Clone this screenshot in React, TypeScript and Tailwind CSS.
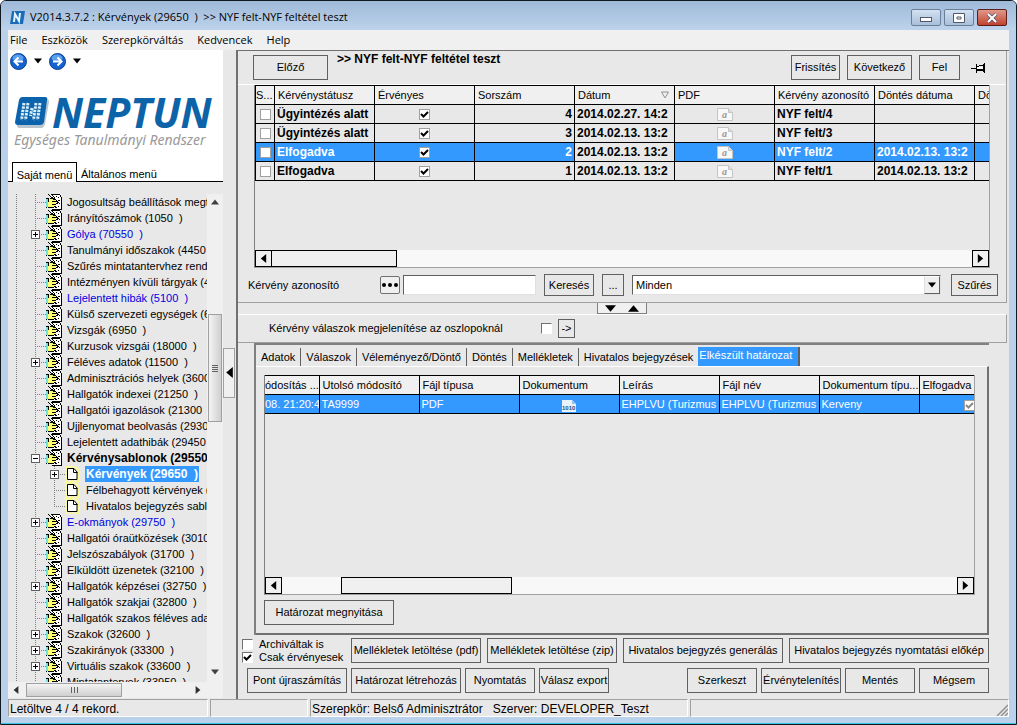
import type { ReactNode } from "react";
import clsx from "clsx";

type TreeItem = {
  label: string;
  box?: "plus" | "minus";
  child?: boolean;
  last?: boolean;
  link?: boolean;
  bold?: boolean;
  selected?: boolean;
};

const treeItems: TreeItem[] = [
  { label: "Jogosultság beállítások megte" },
  { label: "Irányítószámok (1050  )" },
  { label: "Gólya (70550  )", box: "plus", link: true },
  { label: "Tanulmányi időszakok (4450" },
  { label: "Szűrés mintatantervhez rende" },
  { label: "Intézményen kívüli tárgyak (4" },
  { label: "Lejelentett hibák (5100  )", link: true },
  { label: "Külső szervezeti egységek (68" },
  { label: "Vizsgák (6950  )" },
  { label: "Kurzusok vizsgái (18000  )" },
  { label: "Féléves adatok (11500  )", box: "plus" },
  { label: "Adminisztrációs helyek (3600" },
  { label: "Hallgatók indexei (21250  )" },
  { label: "Hallgatói igazolások (21300  )" },
  { label: "Ujjlenyomat beolvasás (29300" },
  { label: "Lejelentett adathibák (29450" },
  { label: "Kérvénysablonok (29550", box: "minus", bold: true },
  { label: "Kérvények (29650  )", box: "plus", child: true, bold: true, selected: true },
  { label: "Félbehagyott kérvények (", child: true },
  { label: "Hivatalos bejegyzés sablo", child: true, last: true },
  { label: "E-okmányok (29750  )", box: "plus", link: true },
  { label: "Hallgatói óraütközések (3010" },
  { label: "Jelszószabályok (31700  )" },
  { label: "Elküldött üzenetek (32100  )" },
  { label: "Hallgatók képzései (32750  )", box: "plus" },
  { label: "Hallgatók szakjai (32800  )" },
  { label: "Hallgatók szakos féléves ada" },
  { label: "Szakok (32600  )", box: "plus" },
  { label: "Szakirányok (33300  )", box: "plus" },
  { label: "Virtuális szakok (33600  )", box: "plus" },
  { label: "Mintatantervek (33950  )" },
];

const requests = [
  { status: "Ügyintézés alatt", no: 4, date: "2014.02.27. 14:2", id: "NYF felt/4", decided: "" },
  { status: "Ügyintézés alatt", no: 3, date: "2014.02.13. 13:2", id: "NYF felt/3", decided: "" },
  { status: "Elfogadva", no: 2, date: "2014.02.13. 13:2", id: "NYF felt/2", decided: "2014.02.13. 13:2", selected: true },
  { status: "Elfogadva", no: 1, date: "2014.02.13. 13:2", id: "NYF felt/1", decided: "2014.02.13. 13:2" },
];

const tabs = ["Adatok", "Válaszok", "Véleményező/Döntő", "Döntés", "Mellékletek", "Hivatalos bejegyzések"];

function Btn({ children, className, label }: { children: ReactNode; className?: string; label?: string }) {
  return (
    <button
      type="button"
      aria-label={label}
      className={clsx(
        "flex shrink-0 items-center justify-center whitespace-nowrap border border-[#606060] bg-[#e8e8e8]",
        className,
      )}
    >
      {children}
    </button>
  );
}

function Check({ label, id, checked, dim, sunken }: { label?: string; id?: string; checked?: boolean; dim?: boolean; sunken?: boolean }) {
  return (
    <span className="inline-grid shrink-0 align-middle">
      <input
        type="checkbox"
        id={id}
        aria-label={label}
        defaultChecked={checked}
        className={clsx(
          "col-start-1 row-start-1 size-[11px] appearance-none border bg-white",
          sunken ? "border-[#707070] border-b-white border-r-white" : "border-[#a0a0a0]",
        )}
      />
      {checked && (
        <svg className="pointer-events-none col-start-1 row-start-1 size-[11px]" viewBox="0 0 11 11">
          <path d="M2 5l2.500 2.500L9 3" fill="none" stroke={dim ? "#8a8a8a" : "#000"} strokeWidth="2" />
        </svg>
      )}
    </span>
  );
}

function Arrow({ dir, className }: { dir: "left" | "right" | "up" | "down"; className?: string }) {
  const points = {
    left: "8,0 8,10 2,5",
    right: "2,0 2,10 8,5",
    up: "0,8 10,8 5,2",
    down: "0,2 10,2 5,8",
  };
  return (
    <svg viewBox="0 0 10 10" className={clsx("shrink-0", className)}>
      <polygon points={points[dir]} fill="currentColor" />
    </svg>
  );
}

/** Hand writing on a sheet, used for every menu group */
function FormIcon() {
  return (
    <svg viewBox="0 0 16 16" className="size-4 shrink-0" shapeRendering="crispEdges">
      <path d="M6 0h9v16H6z" fill="#fff" />
      <path d="M8 0h6v1H8zM15 3h1v13h-1zM14 1h1v2h-1zM6 15h10v1H6zM6 0h2v1H6zM10 2h1v1h-1zM12 3h1v1h-1zM12 6h2v1h-2zM13 9h1v1h-1zM12 12h1v1h-1zM9 13h2v1H9z" fill="#000" />
      <path d="M0 5h2v8H0z" fill="#6fe3e3" />
      <path d="M2 6h2V5h3v1h4v2h-1v2H9v2H8v1H2z" fill="#ffff70" />
      <path d="M0 4h3v1H0zM2 5h1v3H2zM4 4h4v1H4zM7 5h3v1H7zM6 7h6v1H6zM10 9h2v1h-2zM6 10h4v1H6zM8 12h2v1H8zM2 13h6v1H2zM0 13h1v1H0zM11 8h1v1h-1z" fill="#000" />
      <path d="M2 0h1v1H2zM3 1h1v1H3zM4 2h1v1H4zM5 3h2v1H5zM5 0h1v1H5zM6 1h1v1H6zM7 2h1v1H7zM8 3h1v2H8zM9 5h1v1H9zM10 6h1v1h-1zM12 8h1v1h-1z" fill="#000" />
    </svg>
  );
}

function PageIcon() {
  return (
    <svg viewBox="0 0 16 16" className="size-4 shrink-0">
      <path d="M1.500 1h9l3.500 4v10.500H1.500z" fill="none" stroke="#ffff80" strokeWidth="2" strokeDasharray="2 1" />
      <path d="M2.500 2.500h6.500l3 3.500v7.500H2.500z" fill="#fff" stroke="#000" />
      <path d="M8.500 2.500v4h4" fill="none" stroke="#000" />
    </svg>
  );
}

function Guides({ item }: { item: TreeItem }) {
  const x = item.child ? 46 : 27;
  const width = item.child ? 57 : 38;
  return (
    <svg width={width} height={16} className="shrink-0" shapeRendering="crispEdges">
      <g stroke="#808080" strokeDasharray="1 1">
        <path d="M8.500 0v16M27.500 0v16" />
        {item.child && <path d={`M46.500 0v${item.last ? 8 : 16}`} />}
        <path d={`M${x} 8.500H${width}`} />
      </g>
      {item.box && (
        <g fill="none">
          <rect x={x - 3.5} y="4.500" width="8" height="8" fill="#fff" stroke="#606060" />
          <path d={`M${x - 2} 8.500h5`} stroke="#000" />
          {item.box === "plus" && <path d={`M${x + 0.5} 6v5`} stroke="#000" />}
        </g>
      )}
    </svg>
  );
}

function Sidebar() {
  return (
    <aside className="flex w-[215px] shrink-0 flex-col bg-white">
      <div className="flex h-[22px] shrink-0 items-center pl-[2px]">
        <NavCircle dir="left" />
        <Arrow dir="down" className="mx-[7px] size-2" />
        <NavCircle dir="right" />
        <Arrow dir="down" className="mx-[7px] size-2" />
      </div>
      <div className="h-[90px] shrink-0 pl-[6px] pt-5">
        <div className="flex h-10 items-center">
          <svg viewBox="0 0 34 32" className="h-8 w-[36px] shrink-0">
            <path d="M8 3h24q2 0 2 3l-4 22q-1 4-4 4H5q-4 0-3-4l3-21q1-4 3-4z" fill="#b9c4cf" />
            <path d="M7 1h23q3 0 2 3l-3 22q-1 3-4 3H3q-3 0-3-3L4 4q1-3 3-3z" fill="#0c63ad" />
            <path d="M9 7L6.500 24M13 7l-2.500 17M17 12l-1.500 8M21 7l-2.500 17M25 7l-2.500 17" stroke="#d7f0fb" strokeWidth="3" strokeDasharray="2.400 1" fill="none" />
          </svg>
          <span className="pl-[2px] font-['Noto_Sans',sans-serif] text-[41px] font-bold italic leading-10 text-[#0c63a8]">
            NEPTUN
          </span>
        </div>
        <div className="whitespace-nowrap font-['Noto_Sans',sans-serif] text-sm italic leading-4 text-[#999]">
          Egységes Tanulmányi Rendszer
        </div>
      </div>
      <div className="flex h-5 shrink-0 items-stretch">
        <span className="w-1 border-b border-black" />
        <button type="button" className="w-[65px] whitespace-nowrap border border-b-0 border-black bg-white pt-1">
          Saját menü
        </button>
        <button type="button" className="flex-1 whitespace-nowrap border-b border-black pl-1 pt-1 text-left">
          Általános menü
        </button>
      </div>
      <div className="flex min-h-0 flex-1 bg-[#e8e8e8] pt-3">
        <ul className="h-full w-[199px] shrink-0 overflow-hidden">
          {treeItems.map((item) => (
            <li key={item.label} className="flex h-4 items-center">
              <Guides item={item} />
              {item.child ? <PageIcon /> : <FormIcon />}
              <span
                className={clsx(
                  "ml-1 whitespace-pre px-px leading-4",
                  item.link && "text-[#0000e0]",
                  item.bold && "text-xs font-bold",
                  item.selected && "bg-[#3399ff] text-white",
                )}
              >
                {item.label}
              </span>
            </li>
          ))}
        </ul>
        <div className="flex flex-1 flex-col items-center bg-[#f0f0f0] pb-[6px] pt-1 text-[#404040]">
          <Arrow dir="up" className="size-2" />
          <div className="mt-[108px] flex h-[108px] w-[14px] flex-col items-center justify-center gap-px border border-[#a0a0a0] bg-linear-to-r from-[#f4f4f4] to-[#cfcfcf]">
            <i className="h-px w-[6px] bg-[#606060]" />
            <i className="h-px w-[6px] bg-[#606060]" />
            <i className="h-px w-[6px] bg-[#606060]" />
            <i className="h-px w-[6px] bg-[#606060]" />
          </div>
          <span className="flex-1" />
          <Arrow dir="down" className="size-2" />
        </div>
      </div>
      <div className="flex h-4 shrink-0 items-center bg-[#f0f0f0] pl-1 text-[#303030]">
        <Arrow dir="left" className="size-2" />
        <div className="ml-[6px] flex h-[14px] w-24 items-center justify-center gap-[2px] border border-[#a0a0a0] bg-linear-to-b from-[#f4f4f4] to-[#cfcfcf]">
          <i className="h-[6px] w-px bg-[#606060]" />
          <i className="h-[6px] w-px bg-[#606060]" />
          <i className="h-[6px] w-px bg-[#606060]" />
        </div>
        <Arrow dir="right" className="ml-[72px] size-2" />
      </div>
      <div className="h-px shrink-0 bg-[#e8e8e8]" />
    </aside>
  );
}

function NavCircle({ dir }: { dir: "left" | "right" }) {
  return (
    <button type="button" aria-label={dir === "left" ? "Vissza" : "Előre"} className="size-[17px] shrink-0">
      <svg viewBox="0 0 17 17">
        <circle cx="8.500" cy="8.500" r="8" fill="#1463cf" stroke="#0b3e94" />
        <ellipse cx="8" cy="5" rx="5.500" ry="3.500" fill="#5aa0ee" />
        <path
          d={dir === "left" ? "M13 8.500H5M8.500 4.500l-4 4 4 4" : "M4 8.500h8M8.500 4.500l4 4-4 4"}
          fill="none"
          stroke="#fff"
          strokeWidth="2"
        />
      </svg>
    </button>
  );
}

function PdfIcon() {
  return (
    <svg viewBox="0 0 16 13" className="inline h-[13px] w-4 align-middle">
      <path d="M.500.500h11l4 4v8H.500z" fill="#f8f8f8" stroke="#c4c4c4" />
      <path d="M11.500.500v4h4" fill="#ddd" stroke="#c4c4c4" />
      <text x="5" y="10" fontSize="10" fontStyle="italic" fontWeight="bold" fontFamily="Liberation Serif, serif" fill="#999">a</text>
    </svg>
  );
}

function DocIcon() {
  return (
    <svg viewBox="0 0 16 13" className="inline h-[13px] w-4 align-middle">
      <path d="M1 1h10l4 4v8H1z" fill="#e8f2fb" />
      <path d="M11 1v4h4" fill="#9cc4ea" />
      <text x="1" y="11" fontSize="6" fontWeight="bold" fontFamily="Liberation Sans, sans-serif" fill="#1b4f86">1010</text>
    </svg>
  );
}

const cellBase = "h-[19px] overflow-hidden whitespace-nowrap border border-black py-0 leading-4";
const thBase = `${cellBase} bg-[#f0f0f0] text-left font-normal`;
const th = `${thBase} pl-[3px] pr-0`;
const td = `${cellBase} px-[2px]`;

function RequestGrid() {
  return (
    <div className="flex h-[183px] flex-col border border-t-0 border-[#a0a0a0] border-l-[#808080]">
      <div className="min-h-0 flex-1 overflow-hidden">
        <table className="w-[819px] table-fixed border-collapse">
          <colgroup>
            <col className="w-[19px]" />
            <col span={8} className="w-[100px]" />
          </colgroup>
          <thead>
            <tr>
              <th className={clsx(thBase, "px-0")}>S...</th>
              <th className={th}>Kérvénystátusz</th>
              <th className={th}>Érvényes</th>
              <th className={th}>Sorszám</th>
              <th className={th}>
                <span className="flex items-center justify-between pr-[5px]">
                  Dátum
                  <svg viewBox="0 0 8 8" className="size-2">
                    <path d="M.500 1h7L4 7z" fill="none" stroke="#909090" />
                  </svg>
                </span>
              </th>
              <th className={th}>PDF</th>
              <th className={th}>Kérvény azonosító</th>
              <th className={th}>Döntés dátuma</th>
              <th className={th}>Dö</th>
            </tr>
          </thead>
          <tbody className="text-xs font-bold">
            {requests.map((r) => (
              <tr key={r.no} className={clsx(r.selected && "bg-[#3399ff] text-white")}>
                <td className={clsx(td, "text-center")}>
                  <Check label={`Kijelölés ${r.no}`} />
                </td>
                <td className={td}>{r.status}</td>
                <td className={clsx(td, "text-center")}>
                  <Check label={`Érvényes ${r.no}`} checked />
                </td>
                <td className={clsx(td, "text-right")}>{r.no}</td>
                <td className={clsx(td, "bg-[#e8e8e8] text-black")}>{r.date}</td>
                <td className={clsx(td, "text-center")}>
                  <PdfIcon />
                </td>
                <td className={td}>{r.id}</td>
                <td className={td}>{r.decided}</td>
                <td className={td} />
              </tr>
            ))}
          </tbody>
        </table>
      </div>
      <div className="flex h-[17px] shrink-0 bg-[#f8f8f8]">
        <ScrollEnd dir="left" />
        <div className="w-[125px] border border-l-0 border-black bg-[#f0f0f0]" />
        <span className="flex-1" />
        <ScrollEnd dir="right" />
      </div>
    </div>
  );
}

function ScrollEnd({ dir }: { dir: "left" | "right" }) {
  return (
    <button
      type="button"
      aria-label={dir === "left" ? "Görgetés balra" : "Görgetés jobbra"}
      className="flex w-[17px] shrink-0 items-center justify-center border border-black bg-[#f0f0f0]"
    >
      <Arrow dir={dir} className="size-[9px]" />
    </button>
  );
}

function DocumentGrid() {
  return (
    <div className="flex min-h-0 flex-1 flex-col border border-[#a0a0a0] border-l-[#808080] border-t-0">
      <div className="min-h-0 flex-1 overflow-hidden">
        <table className="w-[754px] table-fixed border-collapse">
          <colgroup>
            <col className="w-[54px]" />
            <col span={7} className="w-[100px]" />
          </colgroup>
          <thead>
            <tr>
              <th className={clsx(thBase, "border-l-0 px-0")}>ódosítás ...</th>
              <th className={th}>Utolsó módosító</th>
              <th className={th}>Fájl típusa</th>
              <th className={th}>Dokumentum</th>
              <th className={th}>Leírás</th>
              <th className={th}>Fájl név</th>
              <th className={th}>Dokumentum típu...</th>
              <th className={th}>Elfogadva</th>
            </tr>
          </thead>
          <tbody>
            <tr className="bg-[#3399ff] text-white">
              <td className={clsx(cellBase, "border-l-0 px-0")}>08. 21:20:4</td>
              <td className={td}>TA9999</td>
              <td className={td}>PDF</td>
              <td className={clsx(td, "text-center")}>
                <DocIcon />
              </td>
              <td className={td}>EHPLVU (Turizmus</td>
              <td className={td}>EHPLVU (Turizmus</td>
              <td className={td}>Kerveny</td>
              <td className={clsx(td, "text-center")}>
                <Check label="Elfogadva" checked dim />
              </td>
            </tr>
          </tbody>
        </table>
      </div>
      <div className="flex h-[17px] shrink-0 bg-[#f8f8f8]">
        <ScrollEnd dir="left" />
        <div className="ml-[59px] w-[171px] border border-black bg-[#f0f0f0]" />
        <span className="flex-1" />
        <ScrollEnd dir="right" />
      </div>
    </div>
  );
}

function SearchBar() {
  return (
    <div className="flex h-[34px] items-center pl-[10px] pr-2">
      <label htmlFor="search-id" className="w-[132px] shrink-0">
        Kérvény azonosító
      </label>
      <button
        type="button"
        aria-label="Lista"
        className="flex h-[18px] w-5 shrink-0 items-center justify-center rounded-xs border border-[#707070] bg-[#f0f0f0]"
      >
        <svg viewBox="0 0 16 4" className="h-1 w-4">
          <circle cx="2" cy="2" r="2" />
          <circle cx="8" cy="2" r="2" />
          <circle cx="14" cy="2" r="2" />
        </svg>
      </button>
      <input
        id="search-id"
        className="ml-[3px] h-[20px] w-[133px] border border-[#e0e0e0] border-l-[#606060] border-t-[#606060] bg-white px-1"
      />
      <Btn className="ml-2 h-[22px] w-[50px]">Keresés</Btn>
      <Btn className="ml-2 h-[22px] w-[22px]">...</Btn>
      <div className="ml-2 grid h-[20px] min-w-0 flex-1 border border-[#e0e0e0] border-l-[#606060] border-t-[#606060] bg-white">
        <select aria-label="Szűrő" className="col-start-1 row-start-1 appearance-none bg-transparent px-[3px]">
          <option>Minden</option>
        </select>
        <span className="pointer-events-none col-start-1 row-start-1 flex w-4 items-center justify-center justify-self-end border border-[#606060] border-l-[#e0e0e0] border-t-white bg-[#f0f0f0]">
          <Arrow dir="down" className="size-2" />
        </span>
      </div>
      <Btn className="ml-[10px] h-[22px] w-[47px]">Szűrés</Btn>
    </div>
  );
}

function DetailTabs() {
  return (
    <div className="ml-4 mr-5 flex min-h-0 flex-1 flex-col border-l-2 border-t-2 border-[#808080]">
      <div className="flex h-[21px] shrink-0 items-end">
        {tabs.map((tab, i) => (
          <button
            type="button"
            key={tab}
            className={clsx(
              "h-[18px] whitespace-nowrap px-[5px] leading-[18px]",
              i < tabs.length - 1 && "border-r border-[#606060]",
            )}
          >
            {tab}
          </button>
        ))}
        <button
          type="button"
          className="h-[19px] w-[102px] whitespace-nowrap border-r-2 border-[#606060] bg-[#3399ff] px-px pb-1 text-left leading-4 text-white"
        >
          Elkészült határozat
        </button>
      </div>
      <div className="flex min-h-0 flex-1 flex-col border-b-2 border-r-2 border-t border-[#707070] border-t-white pb-2 pl-2 pr-3 pt-2">
        <DocumentGrid />
        <Btn className="mt-[5px] h-[25px] w-[130px]">Határozat megnyitása</Btn>
      </div>
    </div>
  );
}

function MainPanel() {
  return (
    <main className="flex min-w-0 flex-1 flex-col border-l-2 border-t border-[#707070]">
      <section className="mr-[2px] shrink-0 border-b border-r border-[#a0a0a0]">
        <header className="flex h-[34px] items-center border-b border-white pl-[15px] pr-5">
          <Btn className="h-[25px] w-[75px]">Előző</Btn>
          <h1 className="min-w-0 flex-1 self-start pl-[9px] text-xs font-bold leading-4">&gt;&gt; NYF felt-NYF feltétel teszt</h1>
          <Btn className="h-[25px] w-[49px]">Frissítés</Btn>
          <Btn className="ml-[7px] h-[25px] w-[65px]">Következő</Btn>
          <Btn className="ml-[7px] h-[25px] w-[41px]">Fel</Btn>
          <button type="button" aria-label="Rögzítés" className="ml-[11px] shrink-0">
            <svg viewBox="0 0 15 10" className="h-[10px] w-[15px]" shapeRendering="crispEdges">
              <path d="M0 5h5v1H0zM5 1h1v9H5zM6 3h2v1H6zM8 2h4v1H8zM6 6h6v2H6zM12 1h1v8h-1zM13 0h1v10h-1z" fill="#000" />
              <path d="M6 4h6v2H6z" fill="#fff" />
            </svg>
          </button>
        </header>
        <div className="pl-4 pr-4">
          <RequestGrid />
        </div>
        <SearchBar />
      </section>
      <div className="flex h-[11px] shrink-0 justify-center pr-1">
        <button
          type="button"
          aria-label="Elválasztó"
          className="flex w-[50px] items-center justify-center gap-3 border border-t-0 border-[#808080] bg-[#f0f0f0]"
        >
          <Arrow dir="down" className="size-[11px]" />
          <Arrow dir="up" className="size-[11px]" />
        </button>
      </div>
      <section className="mr-[2px] flex h-[29px] shrink-0 items-center border-b border-r border-t border-[#a0a0a0] border-t-white pl-[31px]">
        <label htmlFor="show-answers" className="w-[272px]">
          Kérvény válaszok megjelenítése az oszlopoknál
        </label>
        <Check id="show-answers" sunken />
        <Btn className="ml-[6px] h-[19px] w-[17px]">-&gt;</Btn>
      </section>
      <DetailTabs />
      <footer className="flex shrink-0 flex-col gap-[5px] pb-[6px] pl-1 pr-5 pt-[3px]">
        <div className="flex h-[25px]">
          <div className="flex w-[109px] shrink-0 flex-col justify-between">
            <label className="flex items-center gap-[6px] leading-3">
              <Check sunken />
              Archiváltak is
            </label>
            <label className="flex items-center gap-[6px] leading-3">
              <Check checked sunken />
              Csak érvényesek
            </label>
          </div>
          <Btn className="w-[130px]">Mellékletek letöltése (pdf)</Btn>
          <Btn className="ml-[6px] w-[130px]">Mellékletek letöltése (zip)</Btn>
          <Btn className="ml-auto w-[160px]">Hivatalos bejegyzés generálás</Btn>
          <Btn className="ml-[6px] w-[200px]">Hivatalos bejegyzés nyomtatási előkép</Btn>
        </div>
        <div className="flex h-[25px] gap-[4px] pl-[5px]">
          <Btn className="w-[100px]">Pont újraszámítás</Btn>
          <Btn className="w-[110px]">Határozat létrehozás</Btn>
          <Btn className="w-[70px]">Nyomtatás</Btn>
          <Btn className="w-[70px]">Válasz export</Btn>
          <Btn className="ml-auto w-[70px]">Szerkeszt</Btn>
          <Btn className="w-[80px]">Érvénytelenítés</Btn>
          <Btn className="w-[70px]">Mentés</Btn>
          <Btn className="w-[70px]">Mégsem</Btn>
        </div>
      </footer>
    </main>
  );
}

function TitleBar() {
  return (
    <div className="flex h-[29px] shrink-0 items-center bg-linear-to-b from-[#9fb9d8] to-[#bdd3ec] pl-[9px] pr-[9px] pt-1 font-['Open_Sans',sans-serif]">
      <svg viewBox="0 0 15 13" className="h-[13px] w-[15px] shrink-0">
        <path d="M2 0h13l-2 13H0z" fill="#1a6cb8" />
        <path d="M4 11l1-8 4 7 1-8" fill="none" stroke="#e4f4ff" strokeWidth="2" />
      </svg>
      <span className="flex-1 whitespace-pre pl-[5px]">V2014.3.7.2 : Kérvények (29650  )  &gt;&gt; NYF felt-NYF feltétel teszt</span>
      <div className="flex h-[17px] gap-[3px]">
        <button type="button" aria-label="Kis méret" className="flex w-[30px] items-center justify-center rounded-xs border border-[#6b7f99] bg-linear-to-b from-[#d3e1f2] to-[#a9bfd9]">
          <svg viewBox="0 0 12 10" className="h-[10px] w-3">
            <rect x=".500" y="4.500" width="11" height="4" fill="#fff" stroke="#505868" />
          </svg>
        </button>
        <button type="button" aria-label="Teljes méret" className="flex w-[30px] items-center justify-center rounded-xs border border-[#6b7f99] bg-linear-to-b from-[#d3e1f2] to-[#a9bfd9]">
          <svg viewBox="0 0 12 10" className="h-[10px] w-3">
            <path d="M.500.500h11v9H.500zM4 4h4v2H4z" fill="#fff" stroke="#505868" />
          </svg>
        </button>
        <button type="button" aria-label="Bezárás" className="flex w-[30px] items-center justify-center rounded-xs border border-[#5e1e1a] bg-linear-to-b from-[#e0988a] to-[#c0402c]">
          <svg viewBox="0 0 12 10" className="h-[10px] w-3">
            <path d="M2 1l8 8M10 1L2 9" stroke="#505868" strokeWidth="3.500" />
            <path d="M2 1l8 8M10 1L2 9" stroke="#fff" strokeWidth="2" />
          </svg>
        </button>
      </div>
    </div>
  );
}

function StatusBar() {
  const cell = "whitespace-pre border border-[#a0a0a0] border-b-white border-r-white pl-px leading-[18px]";
  return (
    <div className="flex h-[18px] shrink-0 gap-[2px] text-xs">
      <span className={clsx(cell, "w-[200px]")}>Letöltve 4 / 4 rekord.</span>
      <span className={clsx(cell, "w-[98px]")} />
      <span className={clsx(cell, "w-[378px]")}>Szerepkör: Belső Adminisztrátor   Szerver: DEVELOPER_Teszt</span>
      <span className={clsx(cell, "flex flex-1 items-end justify-end")}>
        <svg viewBox="0 0 12 12" className="size-3">
          <path d="M1 12L12 1M5 12l7-7M9 12l3-3" stroke="#909090" strokeWidth="1.500" />
        </svg>
      </span>
    </div>
  );
}

export default function App() {
  return (
    <div className="flex h-screen flex-col overflow-hidden rounded-t-md border border-[#101820] bg-[#b9d1ea] font-['Liberation_Sans',Arial,sans-serif] text-[11px] text-black">
      <TitleBar />
      <div className="mx-[7px] mb-[6px] flex min-h-0 flex-1 flex-col bg-[#e8e8e8]">
        <nav className="flex h-5 shrink-0 items-center gap-[14px] bg-[#f0f0f0] pl-[2px] font-['Open_Sans',sans-serif]">
          {["File", "Eszközök", "Szerepkörváltás", "Kedvencek", "Help"].map((item) => (
            <button type="button" key={item}>
              {item}
            </button>
          ))}
        </nav>
        <div className="flex min-h-0 flex-1">
          <Sidebar />
          <div className="flex w-[13px] shrink-0 items-center pb-1">
            <button type="button" aria-label="Menü elrejtése" className="flex h-[50px] w-3 items-center justify-center border border-[#a0a0a0] bg-[#f0f0f0]">
              <Arrow dir="left" className="size-[11px]" />
            </button>
          </div>
          <MainPanel />
        </div>
        <StatusBar />
      </div>
      <div className="h-px shrink-0 bg-[#35c4e0]" />
    </div>
  );
}
